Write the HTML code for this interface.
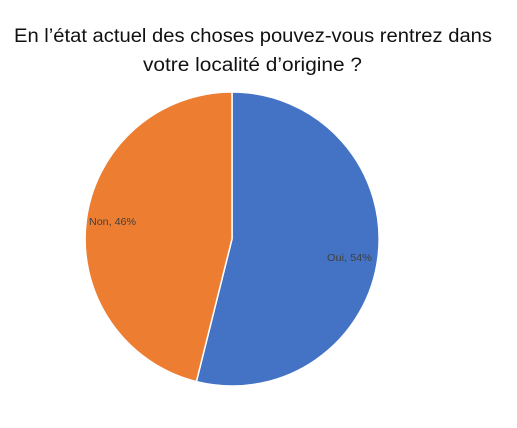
<!DOCTYPE html>
<html><head><meta charset="utf-8"><style>
html,body{margin:0;padding:0;background:#fff;width:517px;height:428px;overflow:hidden}
</style></head><body>
<svg width="517" height="428" xmlns="http://www.w3.org/2000/svg">
<rect width="517" height="428" fill="#fff"/>
<text x="14" y="42" font-family="Liberation Sans, sans-serif" font-size="19" fill="#111" textLength="478" lengthAdjust="spacingAndGlyphs">En l’état actuel des choses pouvez-vous rentrez dans</text>
<text x="143" y="71" font-family="Liberation Sans, sans-serif" font-size="19" fill="#111" textLength="219" lengthAdjust="spacingAndGlyphs">votre localité d’origine ?</text>
<path d="M232 239 L232 92 A147 147 0 1 1 196.4 381.6 Z" fill="#4472c4" stroke="#fff" stroke-width="1.5"/>
<path d="M232 239 L196.4 381.6 A147 147 0 0 1 232 92 Z" fill="#ed7d31" stroke="#fff" stroke-width="1.5"/>
<text x="89" y="225" font-family="Liberation Sans, sans-serif" font-size="10" fill="#404040" textLength="47" lengthAdjust="spacingAndGlyphs">Non, 46%</text>
<text x="327" y="261" font-family="Liberation Sans, sans-serif" font-size="10" fill="#404040" textLength="45" lengthAdjust="spacingAndGlyphs">Oui, 54%</text>
</svg>
</body></html>
